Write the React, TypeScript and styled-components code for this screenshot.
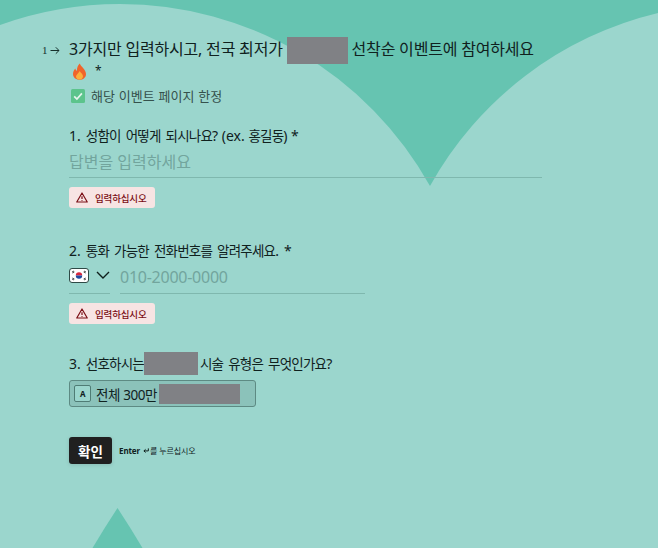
import React from "react";
import styled, { createGlobalStyle } from "styled-components";

const Global = createGlobalStyle`
  html, body { margin: 0; padding: 0; }
  body { background: #9bd6cd; font-family: "Noto Sans", "Noto Sans CJK KR", sans-serif; color: #0f1f1c; }
`;

const Page = styled.div`
  position: relative;
  width: 658px;
  height: 548px;
  overflow: hidden;
  background: #9bd6cd;
`;

const Backdrop = styled.svg`
  position: absolute;
  inset: 0;
`;

const Form = styled.main`
  position: relative;
  display: flex;
  flex-direction: column;
  width: 473px;
  padding: 36px 0 0 69px;
`;

const TitleRow = styled.div`
  position: relative;
`;

const StepMark = styled.span`
  position: absolute;
  left: -27px;
  top: 6px;
  display: flex;
  align-items: center;
  gap: 2px;
  font-family: "Liberation Serif", "DejaVu Serif", serif;
  font-size: 11px;
  line-height: 16px;
  color: #16302b;
`;

const Title = styled.h1`
  margin: 0;
  font-size: 16px;
  font-weight: 400;
  line-height: 27px;
  letter-spacing: -0.2px;
  color: #10211e;
`;

const Redacted = styled.span<{ $w: number; $h: number; $gap?: number }>`
  display: inline-block;
  width: ${(p) => p.$w}px;
  height: ${(p) => p.$h}px;
  margin-right: ${(p) => p.$gap ?? 0}px;
  background: #808185;
  vertical-align: middle;
`;

const FireLine = styled.div`
  display: flex;
  align-items: flex-start;
  gap: 8px;
  height: 18px;
  margin-top: -1px;
  padding-left: 3px;
  font-size: 12px;
  line-height: 16px;
`;

const Note = styled.div`
  display: flex;
  align-items: center;
  gap: 6px;
  margin-top: 5px;
  padding-left: 2px;
  font-size: 13px;
  line-height: 20px;
  letter-spacing: 0.12px;
  color: #35514c;
`;

const Question = styled.section<{ $top: number }>`
  margin-top: ${(p) => p.$top}px;
`;

const Label = styled.div`
  display: flex;
  align-items: center;
  height: 20px;
  font-size: 13.5px;
  letter-spacing: -0.8px;
  word-spacing: 2.3px;
  color: #10211e;
  white-space: pre;
`;

const Latin = styled.span<{ $tight?: boolean }>`
  font-size: 14px;
  letter-spacing: 0;
  word-spacing: ${(p) => (p.$tight ? 0 : 1.4)}px;
`;

const AnswerLine = styled.div`
  margin-top: 4px;
  height: 29px;
  line-height: 26px;
  font-size: 16px;
  color: #72a59d;
  border-bottom: 1px solid #7fb8ae;
  width: 473px;
  box-sizing: border-box;
`;

const ErrorTag = styled.div`
  display: inline-flex;
  align-items: center;
  gap: 7px;
  height: 21px;
  margin-top: 9px;
  padding: 0 8px 0 7px;
  box-sizing: border-box;
  background: #f7e4e3;
  border-radius: 3px;
  font-size: 9.5px;
  font-weight: 500;
  letter-spacing: -0.15px;
  color: #7a0d14;
`;

const PhoneRow = styled.div`
  display: flex;
  gap: 10px;
  margin-top: 1px;
  height: 33px;
`;

const CountryPicker = styled.div`
  display: flex;
  align-items: center;
  gap: 7px;
  width: 41px;
  box-sizing: border-box;
  border-bottom: 1px solid #7fb8ae;
  padding-bottom: 4px;
`;

const PhoneInput = styled.div`
  width: 245px;
  box-sizing: border-box;
  border-bottom: 1px solid #7fb8ae;
  font-size: 16px;
  line-height: 33px;
  letter-spacing: -0.25px;
  color: #72a59d;
`;

const Choice = styled.div`
  display: flex;
  align-items: center;
  gap: 5px;
  width: 187px;
  height: 27px;
  margin-top: 7px;
  padding-left: 4px;
  box-sizing: border-box;
  background: #8bc2ba;
  border: 1px solid #5d8a83;
  border-radius: 3px;
  font-size: 13.5px;
  letter-spacing: -0.4px;
  color: #10211e;
`;

const KeyHint = styled.span`
  display: grid;
  place-items: center;
  width: 15px;
  height: 15px;
  background: #9bd6cd;
  border: 1px solid #4f7c75;
  border-radius: 2px;
  font-size: 8px;
  font-weight: 700;
`;

const ChoiceText = styled.span`
  display: inline-flex;
  align-items: center;
  gap: 2px;
`;

const Actions = styled.div`
  display: flex;
  align-items: center;
  gap: 7px;
  margin-top: 30px;
`;

const Confirm = styled.button`
  width: 43px;
  height: 27px;
  padding: 0;
  border: 0;
  border-radius: 3px;
  background: #202020;
  color: #fff;
  font: 700 13.5px "Noto Sans", "Noto Sans CJK KR", sans-serif;
  box-shadow: 0 1px 4px rgba(0, 0, 0, 0.12);
`;

const EnterHint = styled.span`
  display: inline-flex;
  align-items: center;
  gap: 1px;
  font-size: 8px;
  letter-spacing: -0.1px;
  color: #10211e;
  b { font-weight: 700; margin-right: 2px; }
`;

const Warn = () => (
  <svg width="12" height="11" viewBox="0 0 24 22" fill="none" stroke="#7a0d14" strokeWidth="2.4" strokeLinejoin="round">
    <path d="M12 2 L22.5 20 H1.5 Z" />
    <path d="M12 8.5 V14 M12 16 V17.5" />
  </svg>
);

const Fire = () => (
  <svg width="15" height="17" viewBox="0 0 15 17">
    <path d="M7.8 0.5 C8.5 3.5 13.8 6 14 11 C14.1 14.5 11 16.8 7.5 16.8 C3.8 16.8 1 14.4 1 11 C1 8.5 2.3 6.8 3.3 5.6 C3.6 6.8 4.2 7.6 5 7.8 C4.8 5 5.8 2.2 7.8 0.5 Z" fill="#f0642a" />
    <path d="M7.8 8 C8.2 9.6 11 11 11 13.2 C11 15.2 9.4 16.6 7.5 16.6 C5.6 16.6 4 15.3 4 13.4 C4 11.6 6.6 10.4 7.8 8 Z" fill="#fbb03b" />
  </svg>
);

const Check = () => (
  <svg width="14" height="14" viewBox="0 0 14 14">
    <rect width="14" height="14" rx="1.5" fill="#5cc48c" />
    <path d="M3.2 7.3 L5.9 10 L10.9 4.4" fill="none" stroke="#e6f5ee" strokeWidth="1.7" />
  </svg>
);

const Flag = () => (
  <svg width="20" height="15" viewBox="0 0 20 15">
    <rect x="0.5" y="0.5" width="19" height="14" rx="2.5" fill="#fff" stroke="#2e4a46" />
    <path d="M6.8 7.5 A3.2 3.2 0 0 1 13.2 7.5 Z" fill="#d8263c" />
    <path d="M6.8 7.5 A3.2 3.2 0 0 0 13.2 7.5 Z" fill="#1f4aa0" />
    <path d="M3 4 L5 3 M3.4 5 L5.4 4 M15 3 L17 4 M14.6 4 L16.6 5 M3 11 L5 12 M3.4 10 L5.4 11 M15 12 L17 11 M14.6 11 L16.6 10" stroke="#222" strokeWidth="0.8" />
  </svg>
);

const Chevron = () => (
  <svg width="14" height="8" viewBox="0 0 14 8" fill="none" stroke="#0f1f1c" strokeWidth="1.4">
    <path d="M1 1 L7 7 L13 1" />
  </svg>
);

const Arrow = () => (
  <svg width="10" height="9" viewBox="0 0 10 9" fill="none" stroke="#16302b" strokeWidth="1">
    <path d="M0.5 4.5 H9 M5.8 1.3 L9 4.5 L5.8 7.7" />
  </svg>
);

const EnterKey = () => (
  <svg width="6" height="5" viewBox="0 0 7 6" fill="none" stroke="#10211e" strokeWidth="1.2">
    <path d="M6.3 0.5 V3.5 H1 M3 1.6 L1 3.5 L3 5.4" />
  </svg>
);

export default function App() {
  return (
    <Page>
      <Global />
      <Backdrop width="658" height="548" viewBox="0 0 658 548">
        <path
          fill="#66c4b1"
          d="M0 0 H658 V13 A355 355 0 0 0 430 186 A355 355 0 0 0 120 4 A355 355 0 0 0 0 25 Z"
        />
        <path fill="#66c4b1" d="M117.5 508 Q105 527 92.5 548 H142.5 Q130 527 117.5 508 Z" />
      </Backdrop>
      <Form>
        <TitleRow>
          <StepMark>
            1
            <Arrow />
          </StepMark>
          <Title>
            3가지만 입력하시고, 전국 최저가 <Redacted $w={61} $h={27} /> 선착순 이벤트에 참여하세요
          </Title>
        </TitleRow>
        <FireLine>
          <Fire />
          <span>*</span>
        </FireLine>
        <Note>
          <Check />
          해당 이벤트 페이지 한정
        </Note>
        <Question $top={19}>
          <Label>
            <Latin>1. </Latin>성함이 어떻게 되시나요<Latin $tight>? (ex. </Latin>홍길동<Latin $tight>) *</Latin>
          </Label>
          <AnswerLine>답변을 입력하세요</AnswerLine>
          <ErrorTag>
            <Warn />
            입력하십시오
          </ErrorTag>
        </Question>
        <Question $top={32}>
          <Label>
            <Latin>2. </Latin>통화 가능한 전화번호를 알려주세요<Latin>. *</Latin>
          </Label>
          <PhoneRow>
            <CountryPicker>
              <Flag />
              <Chevron />
            </CountryPicker>
            <PhoneInput>010-2000-0000</PhoneInput>
          </PhoneRow>
          <ErrorTag>
            <Warn />
            입력하십시오
          </ErrorTag>
        </Question>
        <Question $top={29}>
          <Label>
            <Latin>3. </Latin>선호하시는
            <Redacted $w={54} $h={23} $gap={2} />
            {"시술 유형은 무엇인가요"}
            <Latin>?</Latin>
          </Label>
          <Choice>
            <KeyHint>A</KeyHint>
            <ChoiceText>
              전체 300만
              <Redacted $w={81} $h={20} />
            </ChoiceText>
          </Choice>
          <Actions>
            <Confirm>확인</Confirm>
            <EnterHint>
              <b>Enter</b>
              <EnterKey />를 누르십시오
            </EnterHint>
          </Actions>
        </Question>
      </Form>
    </Page>
  );
}
